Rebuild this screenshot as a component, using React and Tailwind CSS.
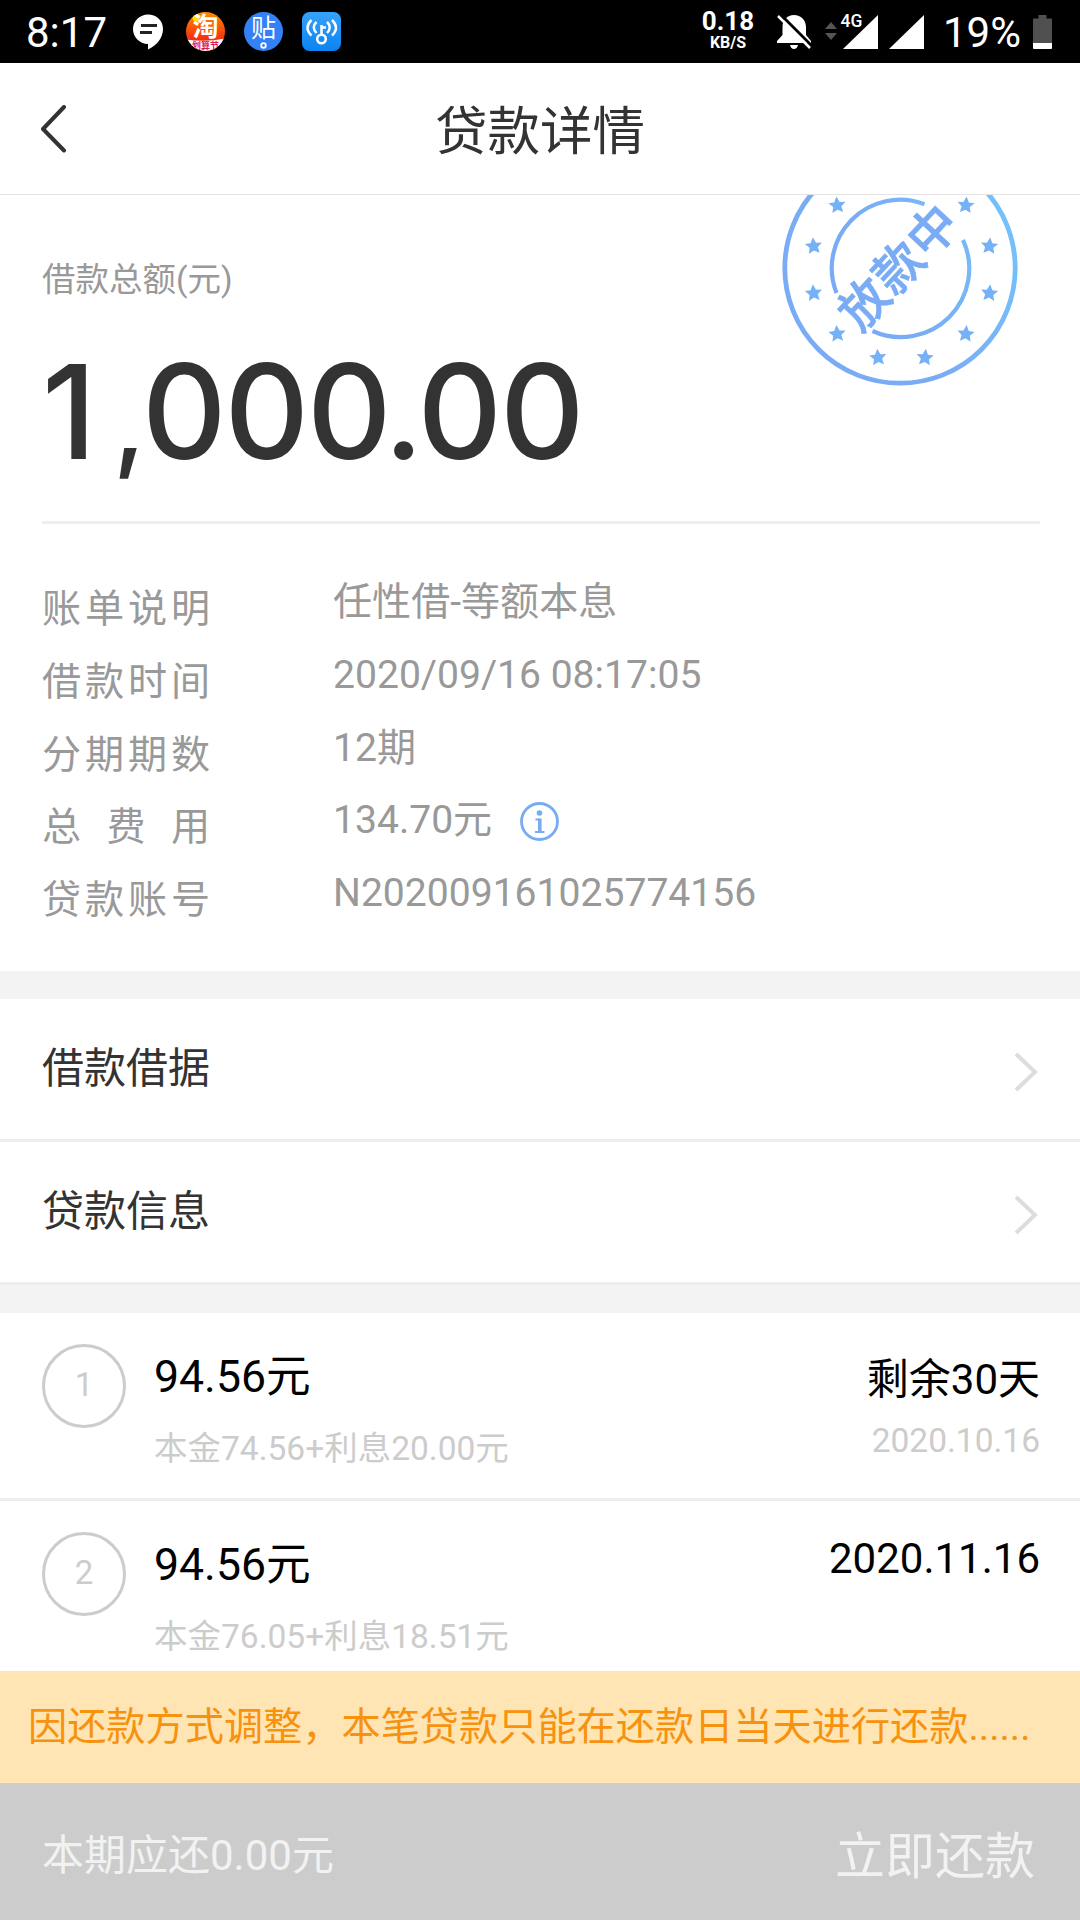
import React from 'react';

const details = [
  { label: '账单说明', value: '任性借-等额本息' },
  { label: '借款时间', value: '2020/09/16 08:17:05' },
  { label: '分期期数', value: '12期' },
  { label: '总费用', value: '134.70元', info: true },
  { label: '贷款账号', value: 'N202009161025774156' },
];

const plans = [
  { no: 1, amount: '94.56元', sub: '本金74.56+利息20.00元', status: '剩余30天', date: '2020.10.16' },
  { no: 2, amount: '94.56元', sub: '本金76.05+利息18.51元', status: '2020.11.16' },
];

function StatusBar() {
  return (
    <div className="flex h-[63px] shrink-0 items-center bg-black pl-[26px] pr-[28px] text-white">
      <span className="w-[107px] pt-[2px] text-[42px] leading-[61px]">8:17</span>
      <svg className="h-[36px] w-[30px]" viewBox="0 0 30 36">
        <path d="M15 0.5C6.8 .5 0 7 0 15s6.500 15 15 15v5.500C24 31 30 24 30 15S23.200 .5 15 .5Z" fill="#fff" />
        <path d="M8 11.500h16M7 18.500h12" stroke="#222" strokeWidth="2.800" />
      </svg>
      <svg className="ml-[23px] h-[39px] w-[39px]" viewBox="0 0 39 39">
        <defs>
          <clipPath id="tb"><circle cx="19.500" cy="19.500" r="19.500" /></clipPath>
          <linearGradient id="tbg" x1="0" y1="0" x2="0" y2="1">
            <stop offset="0" stopColor="#ff8a00" />
            <stop offset=".7" stopColor="#f5300f" />
          </linearGradient>
        </defs>
        <g clipPath="url(#tb)">
          <rect width="39" height="39" fill="url(#tbg)" />
          <circle cx="10" cy="6" r="3.500" fill="#ffe100" />
          <path d="M0 27.500q20 3 39-1v13H0Z" fill="#fff" />
          <text x="19.500" y="24" textAnchor="middle" fontSize="26" fontWeight="700" fill="#fff">淘</text>
          <text x="19.500" y="36.500" textAnchor="middle" fontSize="9" fontWeight="700" fill="#e0164f">划算节</text>
        </g>
      </svg>
      <svg className="ml-[19px] h-[39px] w-[39px]" viewBox="0 0 39 39">
        <circle cx="19.500" cy="19.500" r="19.500" fill="#3480f6" />
        <text x="19.500" y="25" textAnchor="middle" fontSize="25" fill="#fff">贴</text>
        <circle cx="19.500" cy="33.500" r="2.300" fill="none" stroke="#fff" strokeWidth="1.800" />
      </svg>
      <svg className="ml-[19px] h-[39px] w-[39px]" viewBox="0 0 39 39">
        <defs>
          <linearGradient id="wifi" x1="0" y1="0" x2="0" y2="1">
            <stop offset="0" stopColor="#36a2fb" />
            <stop offset="1" stopColor="#0c83f0" />
          </linearGradient>
        </defs>
        <rect width="39" height="39" rx="7.500" fill="url(#wifi)" />
        <g fill="none" stroke="#fff" strokeWidth="2.500">
          <circle cx="19.500" cy="27" r="4.300" />
          <path d="M19.500 23V13M19.500 15.500h4.500" />
          <path d="M14.500 10q-5.500 5 0 11M9.500 8q-8 7.500 0 15.500M25 10q5.500 5 0 11M30 8q8 7.500 0 15.500" />
        </g>
      </svg>
      <div className="ml-auto mr-[21px] flex w-[54px] flex-col items-center pb-1 font-bold">
        <span className="text-[26px] leading-[27px]">0.18</span>
        <span className="text-[16px] leading-4">KB/S</span>
      </div>
      <svg className="h-[36px] w-[36px]" viewBox="0 0 36 36">
        <path d="M18 1C11 1 6.500 6 6.500 13v8L1 27v2h34v-2l-5-6v-8C30 6 25 1 18 1ZM14 31h8q-1 4-4 4t-4-4Z" fill="#fff" />
        <path d="M4 0 36 32" stroke="#000" strokeWidth="3" />
        <path d="M2 2 34 34" stroke="#fff" strokeWidth="2.500" />
      </svg>
      <svg className="ml-[13px] h-[36px] w-[53px] overflow-visible" viewBox="0 0 53 36">
        <path d="M0 15l6-7 6 7ZM0 19h12l-6 7Z" fill="#555" />
        <path d="M53 1v34H18Z" fill="#fff" />
        <text x="15.500" y="12.500" fontSize="17.500" fontWeight="500" fill="#fff" stroke="#000" strokeWidth="3" paintOrder="stroke">4G</text>
      </svg>
      <svg className="ml-[11px] h-[36px] w-[35px]" viewBox="0 0 35 36">
        <path d="M35 1v34H0Z" fill="#fff" />
      </svg>
      <span className="ml-[19px] mr-[12px] pt-[2px] text-[42px] leading-[61px]">19%</span>
      <svg className="h-[34px] w-[19px]" viewBox="0 0 19 34">
        <path d="M5.500 0h8v3.500H18q1 0 1 1V28H0V4.500q0-1 1-1h4.500Z" fill="#505050" />
        <path d="M0 28h19v5q0 1-1 1H1q-1 0-1-1Z" fill="#fff" />
      </svg>
    </div>
  );
}

function Header() {
  return (
    <header className="relative z-10 flex h-[132px] shrink-0 items-center border-b border-[#e4e4e4] bg-white px-10">
      <svg className="h-[48px] w-[28px]" viewBox="0 0 28 48" fill="none">
        <path d="M24 2 3 24l21 21.500" stroke="#333" strokeWidth="4" strokeLinecap="round" strokeLinejoin="round" />
      </svg>
      <h1 className="flex-1 pr-7 pt-[7px] text-center text-[52.500px] leading-[125px] text-[#333]">贷款详情</h1>
    </header>
  );
}

function Stamp() {
  const stars = Array.from({ length: 12 }, (_, i) => 15 + i * 30);
  return (
    <svg className="absolute right-[62px] -top-[45px] h-[236px] w-[236px]" viewBox="-118 -118 236 236">
      <defs>
        <linearGradient id="stamp" gradientUnits="userSpaceOnUse" x1="0" y1="40" x2="110" y2="-20">
          <stop offset="0" stopColor="#7aabf5" />
          <stop offset="1" stopColor="#74c0fa" />
        </linearGradient>
      </defs>
      <circle r="115.200" fill="none" stroke="url(#stamp)" strokeWidth="4.800" />
      <path d="M-63.500 25A68.300 68.300 0 0 1 24.500-63.800" fill="none" stroke="url(#stamp)" strokeWidth="4.200" />
      <path d="M63-28A68.500 68.500 0 0 1-27.500 63" fill="none" stroke="url(#stamp)" strokeWidth="4.200" />
      <g fill="#75b1f7">
        {stars.map((deg) => {
          const a = (deg * Math.PI) / 180;
          const x = 1.5 + 91 * Math.cos(a);
          const y = 1.5 + 91 * Math.sin(a);
          return (
            <path
              key={deg}
              transform={`translate(${x} ${y}) rotate(${deg > 90 && deg < 270 ? -5 : 5})`}
              d="M0-8.800 2.700-3 8.600-2.700 4.100 1.500 5.400 7.400 0 4.500-5.400 7.400-4.100 1.500-8.600-2.700-2.700-3Z"
            />
          );
        })}
      </g>
      <text
        transform="rotate(-47)"
        x="0"
        y="16"
        textAnchor="middle"
        fontSize="49"
        fontWeight="500"
        letterSpacing="1"
        fill="#7aabf5"
        stroke="#7aabf5"
        strokeWidth=".6"
      >
        放款中
      </text>
    </svg>
  );
}

function Summary() {
  return (
    <section className="relative h-[776px] shrink-0 pl-[42px] pr-10 pt-[64px]">
      <Stamp />
      <p className="text-[33.500px] leading-[41px] text-[#999]">借款总额(元)</p>
      {/* fixed digit cells keep the figure tightly spaced */}
      <p className="mt-[45px] flex h-[176px] items-baseline font-['Inter'] text-[131px] font-medium leading-[134px] text-[#333]">
        <span className="w-[71px]">1</span>
        <span className="w-[29px] text-center text-[108px]">,</span>
        <span className="w-[82.500px] text-center">0</span>
        <span className="w-[82.500px] text-center">0</span>
        <span className="w-[82.500px] text-center">0</span>
        <span className="flex w-[28px] justify-center">.</span>
        <span className="w-[82.500px] text-center">0</span>
        <span className="w-[82.500px] text-center">0</span>
      </p>
      <div className="h-[3px] bg-[#eee]" />
      <dl className="mt-[42px] text-[39.100px] text-[#999]">
        {details.map((item) => (
          <div key={item.label} className="flex h-[72.750px] items-start">
            <dt className="mr-[123px] w-[168px] pt-[7px] leading-[73px] [text-align-last:justify]">{item.label}</dt>
            <dd className="flex items-center leading-[73px]">
              {item.value}
              {item.info && <InfoIcon />}
            </dd>
          </div>
        ))}
      </dl>
    </section>
  );
}

function InfoIcon() {
  return (
    <svg className="ml-7 mt-px h-[39px] w-[39px]" viewBox="0 0 39 39" fill="none" stroke="#77abf2">
      <circle cx="19.500" cy="19.500" r="18" strokeWidth="2.800" />
      <circle cx="19.500" cy="11" r="2.800" fill="#77abf2" stroke="none" />
      <path d="M15.500 17.500h3.500v12.500M15 30h9.500" strokeWidth="2" />
      <path d="M19.800 16.500V30" strokeWidth="3.600" />
    </svg>
  );
}

function Cell({ title }) {
  return (
    <div className="flex h-[143px] shrink-0 items-center justify-between border-b-[3px] border-[#eee] px-[42px]">
      <span className="text-[42px] leading-[140px] text-[#333]">{title}</span>
      <svg className="mt-[6px] h-[40px] w-[25px]" viewBox="0 0 25 40" fill="none">
        <path d="M3 2 22 20 3 38" stroke="#ddd" strokeWidth="4" />
      </svg>
    </div>
  );
}

function PlanRow({ plan }) {
  return (
    <div className="flex h-[188px] shrink-0 items-start border-b-[3px] border-[#eee] pl-[42px] pr-10 pt-[31px]">
      <span className="h-[84px] w-[84px] rounded-full border-[3px] border-[#ccc] text-center text-[33px] leading-[75px] text-[#ccc]">
        {plan.no}
      </span>
      <div className="ml-[28px] flex-1">
        <p className="text-[44.600px] leading-[66px] text-black">{plan.amount}</p>
        <p className="mt-[14px] text-[33.500px] leading-[50px] text-[#ccc]">{plan.sub}</p>
      </div>
      <div className="text-right">
        <p className={`text-[42px] text-black ${plan.date ? 'leading-[72px]' : 'leading-[54px]'}`}>{plan.status}</p>
        <p className="text-[33.500px] leading-[50px] text-[#ccc]">{plan.date}</p>
      </div>
    </div>
  );
}

function App() {
  return (
    <div className="flex h-[1920px] w-[1080px] flex-col overflow-hidden bg-white font-['Roboto','Noto_Sans_CJK_SC',sans-serif]">
      <StatusBar />
      <Header />
      <Summary />
      <div className="h-7 shrink-0 bg-[#f3f3f3]" />
      <Cell title="借款借据" />
      <Cell title="贷款信息" />
      <div className="h-7 shrink-0 bg-[#f3f3f3]" />
      <div className="min-h-0 flex-1 overflow-hidden">
        {plans.map((plan) => (
          <PlanRow key={plan.no} plan={plan} />
        ))}
      </div>
      <div className="h-[112px] shrink-0 whitespace-nowrap bg-[#ffe5b3] pl-7 text-[39.200px] leading-[112px] text-[#f7920f]">
        因还款方式调整，本笔贷款只能在还款日当天进行还款......
      </div>
      <footer className="flex h-[137px] shrink-0 items-center justify-between bg-[#ccc] pl-[42px] pr-[45px] pt-[9px] text-[#f2f2f2]">
        <span className="text-[42px] leading-[128px]">本期应还0.00元</span>
        <span className="pt-[2px] text-[50px] leading-[128px]">立即还款</span>
      </footer>
    </div>
  );
}

export default App;
